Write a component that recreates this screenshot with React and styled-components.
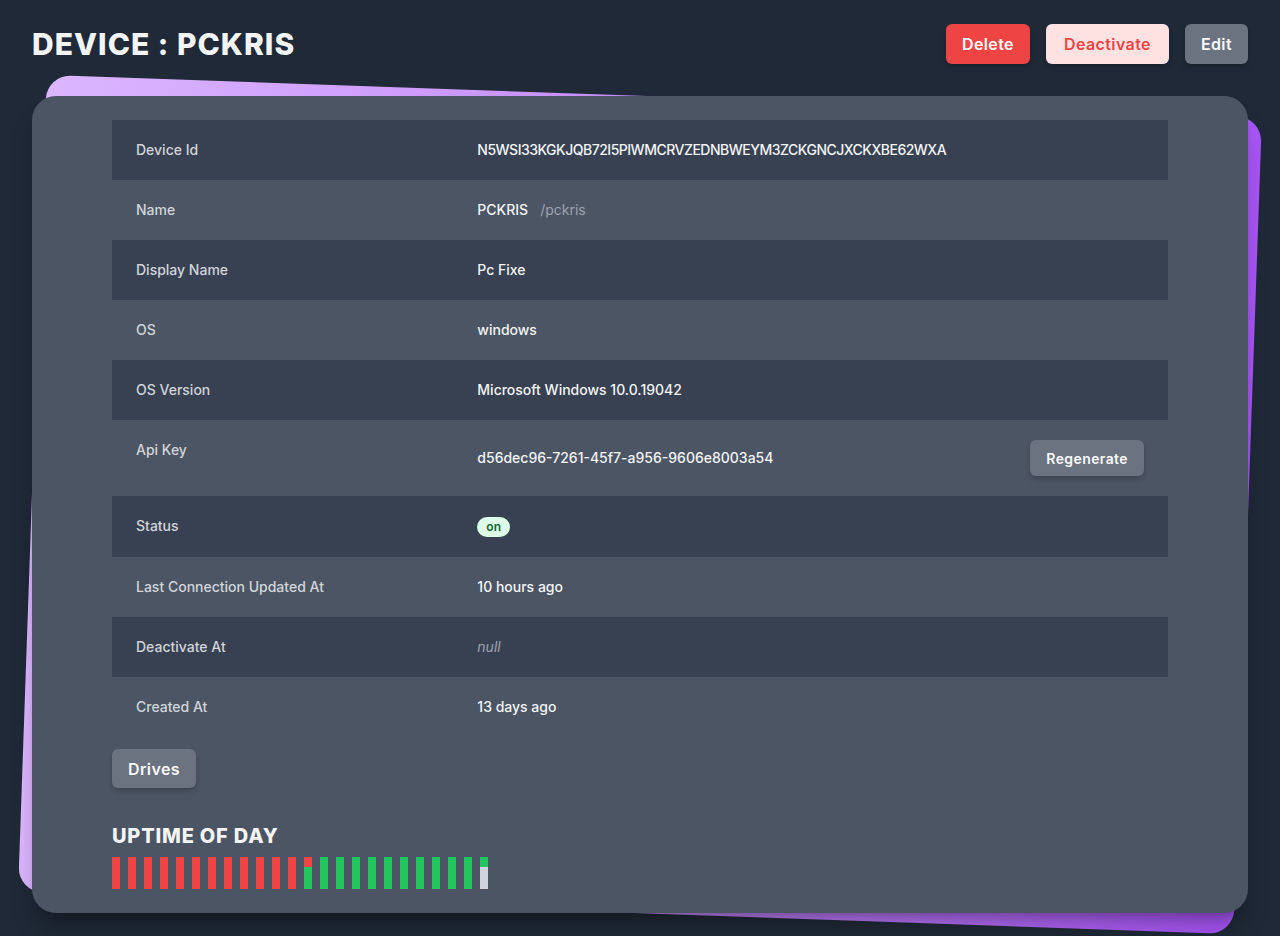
import React from "react";
import styled, { createGlobalStyle } from "styled-components";

const GlobalStyle = createGlobalStyle`
  html, body {
    margin: 0;
    padding: 0;
    background: #1f2937;
    font-family: Inter, "Noto Sans", sans-serif;
    color: #f3f4f6;
  }
  * { box-sizing: border-box; }
`;

const Page = styled.div`
  padding: 24px 32px 24px 32px;
  min-height: 936px;
`;

const Header = styled.div`
  display: flex;
  align-items: center;
  justify-content: space-between;
  height: 40px;
`;

const Title = styled.h1`
  margin: 0;
  font-size: 30px;
  font-weight: 800;
  letter-spacing: 1px;
  color: #f3f4f6;
  text-transform: uppercase;
`;

const Actions = styled.div`
  display: flex;
  gap: 16px;
  align-items: center;
`;

const colors = {
  danger: { bg: "#ef4444", fg: "#ffffff" },
  soft: { bg: "#fee2e2", fg: "#ef4444" },
  gray: { bg: "#6b7280", fg: "#f9fafb" },
};

const Button = styled.button`
  border: none;
  border-radius: 6px;
  height: ${({ $h }) => $h || 40}px;
  padding: 0 ${({ $px }) => $px || 16}px;
  font-family: inherit;
  font-size: ${({ $fs }) => $fs || 16}px;
  font-weight: 600;
  letter-spacing: 0.4px;
  background: ${({ $kind }) => colors[$kind].bg};
  color: ${({ $kind }) => colors[$kind].fg};
  box-shadow: 0 4px 6px -1px rgba(0, 0, 0, 0.15), 0 2px 4px -2px rgba(0, 0, 0, 0.15);
  cursor: pointer;
`;

const CardWrap = styled.div`
  position: relative;
  margin-top: 32px;
`;

const Backdrop = styled.div`
  position: absolute;
  inset: 0;
  border-radius: 24px;
  background: linear-gradient(90deg, #dbb6fe 0%, #c58cfb 50%, #a855f7 100%);
  transform: rotate(2deg);
`;

const Card = styled.div`
  position: relative;
  background: #4b5563;
  border-radius: 24px;
  padding: 24px 80px 24px 80px;
  box-shadow: 0 20px 25px -5px rgba(0, 0, 0, 0.25), 0 8px 10px -6px rgba(0, 0, 0, 0.2);
`;

const List = styled.dl`
  margin: 0;
`;

const Row = styled.div`
  display: grid;
  grid-template-columns: repeat(3, 1fr);
  gap: 16px;
  padding: 20px 24px;
  min-height: ${({ $tall }) => ($tall ? 61 : 60)}px;
  background: ${({ $odd }) => ($odd ? "#374151" : "transparent")};
`;

const Label = styled.dt`
  font-size: 14px;
  line-height: 20px;
  font-weight: 500;
  color: #d1d5db;
`;

const Value = styled.dd`
  margin: 0;
  grid-column: span 2;
  font-size: 14px;
  line-height: 20px;
  font-weight: 500;
  color: #f3f4f6;
  display: flex;
  align-items: center;
  justify-content: ${({ $split }) => ($split ? "space-between" : "flex-start")};
`;

const Code = styled.span`
  letter-spacing: -0.5px;
`;

const Muted = styled.span`
  color: #9ca3af;
  font-weight: 400;
  margin-left: 12px;
`;

const Null = styled.span`
  color: #9ca3af;
  font-style: italic;
  font-weight: 400;
`;

const Badge = styled.span`
  display: inline-flex;
  align-items: center;
  height: 20px;
  padding: 0 9px;
  border-radius: 999px;
  background: #dcfce7;
  color: #166534;
  font-size: 12px;
  font-weight: 600;
`;

const Footer = styled.div`
  margin-top: 12px;
`;

const SectionTitle = styled.h2`
  margin: 34px 0 0 0;
  font-size: 20px;
  line-height: 28px;
  font-weight: 800;
  letter-spacing: 0.8px;
  color: #f3f4f6;
  text-transform: uppercase;
`;

const Bars = styled.div`
  display: flex;
  gap: 8px;
  margin-top: 7px;
`;

const Bar = styled.div`
  width: 8px;
  height: 32px;
  display: flex;
  flex-direction: column;
`;

const Seg = styled.div`
  background: ${({ $c }) => $c};
`;

const RED = "#ef4444";
const GREEN = "#22c55e";
const GRAY = "#d1d5db";

const hours = [
  ...Array(12).fill([[RED, 1]]),
  [[RED, 0.3], [GREEN, 0.7]],
  ...Array(10).fill([[GREEN, 1]]),
  [[GREEN, 0.3], [GRAY, 0.7]],
];

const rows = [
  ["Device Id", <Code>N5WSI33KGKJQB72I5PIWMCRVZEDNBWEYM3ZCKGNCJXCKXBE62WXA</Code>],
  ["Name", <>PCKRIS<Muted>/pckris</Muted></>],
  ["Display Name", "Pc Fixe"],
  ["OS", "windows"],
  ["OS Version", "Microsoft Windows 10.0.19042"],
  ["Api Key", "api"],
  ["Status", <Badge>on</Badge>],
  ["Last Connection Updated At", "10 hours ago"],
  ["Deactivate At", <Null>null</Null>],
  ["Created At", "13 days ago"],
];

export default function App() {
  return (
    <>
      <GlobalStyle />
      <Page>
        <Header>
          <Title>Device : PCKRIS</Title>
          <Actions>
            <Button $kind="danger">Delete</Button>
            <Button $kind="soft" $px={18}>Deactivate</Button>
            <Button $kind="gray">Edit</Button>
          </Actions>
        </Header>
        <CardWrap>
          <Backdrop />
          <Card>
            <List>
              {rows.map(([label, value], i) =>
                value === "api" ? (
                  <Row key={label} $odd={i % 2 === 0}>
                    <Label>{label}</Label>
                    <Value $split>
                      <span>d56dec96-7261-45f7-a956-9606e8003a54</span>
                      <Button $kind="gray" $h={36} $fs={14}>
                        Regenerate
                      </Button>
                    </Value>
                  </Row>
                ) : (
                  <Row key={label} $odd={i % 2 === 0} $tall={label === "Status"}>
                    <Label>{label}</Label>
                    <Value>{value}</Value>
                  </Row>
                )
              )}
            </List>
            <Footer>
              <Button $kind="gray" $h={39}>Drives</Button>
              <SectionTitle>Uptime of day</SectionTitle>
              <Bars>
                {hours.map((segs, i) => (
                  <Bar key={i}>
                    {segs.map(([c, f], j) => (
                      <Seg key={j} $c={c} style={{ flex: f }} />
                    ))}
                  </Bar>
                ))}
              </Bars>
            </Footer>
          </Card>
        </CardWrap>
      </Page>
    </>
  );
}
